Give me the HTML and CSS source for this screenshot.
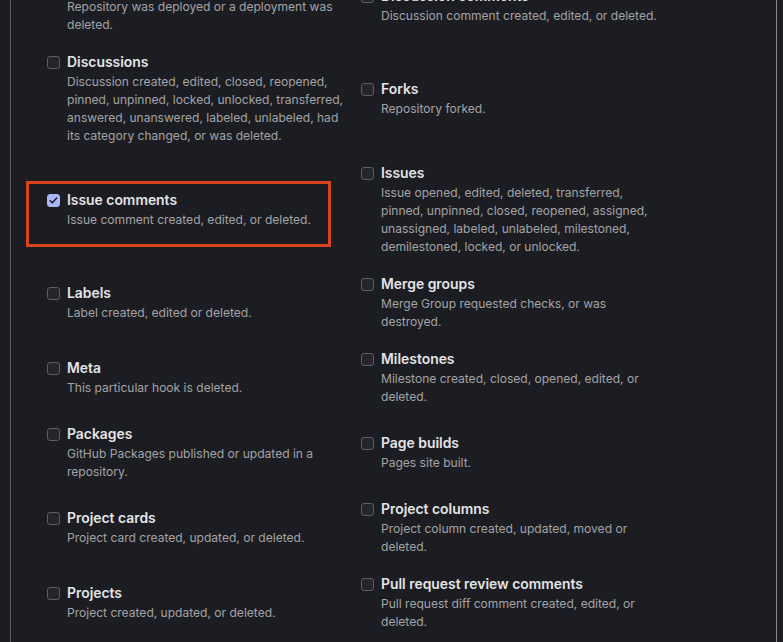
FILE: index.html
```html
<!DOCTYPE html>
<html lang="en">
<head>
<meta charset="utf-8">
<title>Webhook events</title>
<link rel="stylesheet" href="styles.css">
</head>
<body>
<div class="panel">
  <ul class="events">
    <li class="event">
      <span class="box"></span>
      <div class="text"><div class="title">Deployments</div><div class="desc">Repository was deployed or a deployment was deleted.</div></div>
    </li>
    <li class="event">
      <span class="box"></span>
      <div class="text"><div class="title">Discussion comments</div><div class="desc">Discussion comment created, edited, or deleted.</div></div>
    </li>
    <li class="event">
      <span class="box"></span>
      <div class="text"><div class="title">Discussions</div><div class="desc">Discussion created, edited, closed, reopened, pinned, unpinned, locked, unlocked, transferred, answered, unanswered, labeled, unlabeled, had its category changed, or was deleted.</div></div>
    </li>
    <li class="event">
      <span class="box"></span>
      <div class="text"><div class="title">Forks</div><div class="desc">Repository forked.</div></div>
    </li>
    <li class="event">
      <span class="box checked"><svg viewBox="0 0 16 16" width="11" height="11"><path d="M3.2 8.4l3 3 6.6-7" fill="none" stroke="#1c1d22" stroke-width="2.2" stroke-linecap="round" stroke-linejoin="round"/></svg></span>
      <div class="text"><div class="title">Issue comments</div><div class="desc">Issue comment created, edited, or deleted.</div></div>
      <span class="highlight"></span>
    </li>
    <li class="event">
      <span class="box"></span>
      <div class="text"><div class="title">Issues</div><div class="desc">Issue opened, edited, deleted, transferred, pinned, unpinned, closed, reopened, assigned, unassigned, labeled, unlabeled, milestoned, demilestoned, locked, or unlocked.</div></div>
    </li>
    <li class="event">
      <span class="box"></span>
      <div class="text"><div class="title">Labels</div><div class="desc">Label created, edited or deleted.</div></div>
    </li>
    <li class="event">
      <span class="box"></span>
      <div class="text"><div class="title">Merge groups</div><div class="desc">Merge Group requested checks, or was destroyed.</div></div>
    </li>
    <li class="event">
      <span class="box"></span>
      <div class="text"><div class="title">Meta</div><div class="desc">This particular hook is deleted.</div></div>
    </li>
    <li class="event">
      <span class="box"></span>
      <div class="text"><div class="title">Milestones</div><div class="desc">Milestone created, closed, opened, edited, or deleted.</div></div>
    </li>
    <li class="event">
      <span class="box"></span>
      <div class="text"><div class="title">Packages</div><div class="desc">GitHub Packages published or updated in a repository.</div></div>
    </li>
    <li class="event">
      <span class="box"></span>
      <div class="text"><div class="title">Page builds</div><div class="desc">Pages site built.</div></div>
    </li>
    <li class="event">
      <span class="box"></span>
      <div class="text"><div class="title">Project cards</div><div class="desc">Project card created, updated, or deleted.</div></div>
    </li>
    <li class="event">
      <span class="box"></span>
      <div class="text"><div class="title">Project columns</div><div class="desc">Project column created, updated, moved or deleted.</div></div>
    </li>
    <li class="event">
      <span class="box"></span>
      <div class="text"><div class="title">Projects</div><div class="desc">Project created, updated, or deleted.</div></div>
    </li>
    <li class="event">
      <span class="box"></span>
      <div class="text"><div class="title">Pull request review comments</div><div class="desc">Pull request diff comment created, edited, or deleted.</div></div>
    </li>
  </ul>
</div>
</body>
</html>
```

FILE: styles.css
```css
html, body {
  margin: 0;
  padding: 0;
  background: #1c1d22;
  overflow: hidden;
  height: 642px;
}
body {
  font-family: Inter, "Liberation Sans", sans-serif;
}
.panel {
  margin: -24px 0 0 10px;
  width: 765px;
  border-left: 1px solid #5f5f62;
  border-right: 1px solid #8a8784;
  min-height: 700px;
  box-sizing: content-box;
}
.events {
  list-style: none;
  margin: 0;
  padding: 0 0 0 36px;
  display: grid;
  grid-template-columns: 314px 314px;
  row-gap: 17px;
  align-items: center;
}
.event {
  position: relative;
  display: flex;
  align-items: flex-start;
}
.box {
  flex: none;
  width: 11px;
  height: 11px;
  margin-top: 5px;
  margin-right: 7px;
  border: 1px solid #5d5e63;
  border-radius: 3px;
  background: #25262b;
  display: flex;
  align-items: center;
  justify-content: center;
}
.box.checked {
  background: #a9b6f7;
  border-color: #a9b6f7;
}
.box svg { display: block; }
.text {
  width: 278px;
}
.title {
  font-size: 13.9px;
  line-height: 22px;
  font-weight: 600;
  color: #e4e4e6;
}
.desc {
  font-size: 12.05px;
  line-height: 18px;
  color: #a3a3a6;
}
.highlight {
  position: absolute;
  top: -8px;
  left: -21px;
  width: 299px;
  bottom: -18px;
  border: 3px solid #d9431d;
}
```
